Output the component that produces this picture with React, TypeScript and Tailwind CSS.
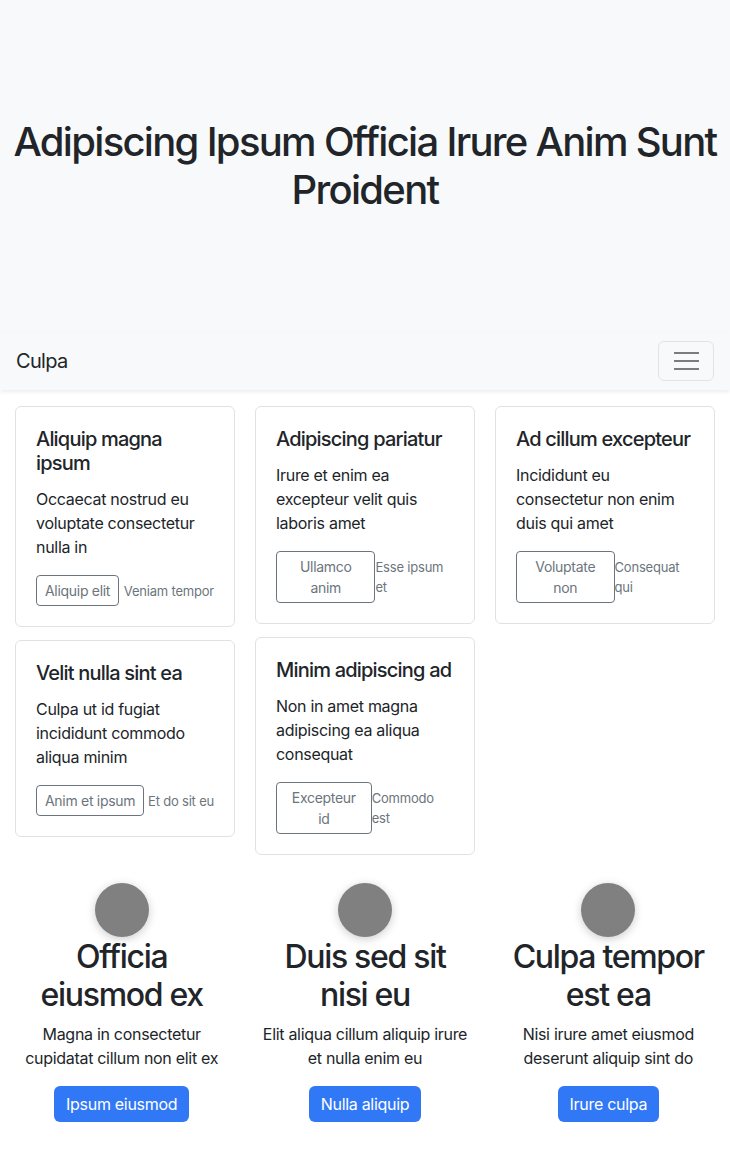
import type { ReactNode } from 'react'

interface CardData {
  title: string
  text: string
  action: string
  note: string
}

const COLUMNS: CardData[][] = [
  [
    {
      title: 'Aliquip magna ipsum',
      text: 'Occaecat nostrud eu voluptate consectetur nulla in',
      action: 'Aliquip elit',
      note: 'Veniam tempor',
    },
    {
      title: 'Velit nulla sint ea',
      text: 'Culpa ut id fugiat incididunt commodo aliqua minim',
      action: 'Anim et ipsum',
      note: 'Et do sit eu',
    },
  ],
  [
    {
      title: 'Adipiscing pariatur',
      text: 'Irure et enim ea excepteur velit quis laboris amet',
      action: 'Ullamco anim',
      note: 'Esse ipsum et',
    },
    {
      title: 'Minim adipiscing ad',
      text: 'Non in amet magna adipiscing ea aliqua consequat',
      action: 'Excepteur id',
      note: 'Commodo est',
    },
  ],
  [
    {
      title: 'Ad cillum excepteur',
      text: 'Incididunt eu consectetur non enim duis qui amet',
      action: 'Voluptate non',
      note: 'Consequat qui',
    },
  ],
]

const FEATURES = [
  {
    title: 'Officia eiusmod ex',
    text: 'Magna in consectetur cupidatat cillum non elit ex',
    cta: 'Ipsum eiusmod',
  },
  {
    title: 'Duis sed sit nisi eu',
    text: 'Elit aliqua cillum aliquip irure et nulla enim eu',
    cta: 'Nulla aliquip',
  },
  {
    title: 'Culpa tempor est ea',
    text: 'Nisi irure amet eiusmod deserunt aliquip sint do',
    cta: 'Irure culpa',
  },
]

function Card({ card }: { card: CardData }) {
  return (
    <div className="rounded-[6px] border border-[#dee2e6] bg-white p-5">
      <h5 className="mb-3 text-[20px] font-medium leading-6 tracking-[-0.8px] text-[#212529]">
        {card.title}
      </h5>
      <p className="mb-4 text-[16px] leading-6 tracking-[-0.3px] text-[#212529]">{card.text}</p>
      <div className="flex items-center justify-between">
        <button
          type="button"
          className="rounded-[4px] border border-[#6c757d] bg-transparent px-2 py-1 text-[14px] leading-[21px] tracking-[-0.3px] text-[#6c757d]"
        >
          {card.action}
        </button>
        <small className="text-[13px] leading-5 tracking-[-0.2px] text-[#6c757d]">{card.note}</small>
      </div>
    </div>
  )
}

function Column({ children }: { children: ReactNode }) {
  return <div className="flex flex-col gap-[13px]">{children}</div>
}

export default function App() {
  return (
    <div className="min-h-[1152px] bg-white font-['Inter','Liberation_Sans',sans-serif] text-[#212529]">
      {/* Hero */}
      <section className="flex h-[332px] items-center justify-center bg-[#f8f9fa] px-3">
        <h1 className="text-center text-[40px] font-medium leading-[48px] tracking-[-1.7px] text-[#212529]">
          Adipiscing Ipsum Officia Irure Anim Sunt Proident
        </h1>
      </section>

      {/* Navbar */}
      <nav className="relative flex h-[58px] items-center justify-between bg-[#f8f9fa] px-4 shadow-[0_2px_4px_rgba(0,0,0,0.075)]">
        <span className="text-[20px] leading-[30px] tracking-[-0.7px] text-[#212529]">Culpa</span>
        <button
          type="button"
          className="flex h-10 w-14 flex-col items-center justify-center gap-[6px] rounded-[6px] border border-[#e2e3e5]"
        >
          <span className="h-[2px] w-[25px] bg-[#7a7c7e]" />
          <span className="h-[2px] w-[25px] bg-[#7a7c7e]" />
          <span className="h-[2px] w-[25px] bg-[#7a7c7e]" />
        </button>
      </nav>

      {/* Cards */}
      <section className="mt-4 grid grid-cols-3 items-start gap-5 px-[15px]">
        {COLUMNS.map((col, i) => (
          <Column key={i}>
            {col.map((card) => (
              <Card key={card.title} card={card} />
            ))}
          </Column>
        ))}
      </section>

      {/* Features */}
      <section className="mt-7 grid grid-cols-3 pb-7">
        {FEATURES.map((f) => (
          <div key={f.title} className="flex flex-col items-center px-3 text-center">
            <div className="h-[54px] w-[54px] rounded-full bg-[#808080] shadow-[0_2px_10px_rgba(0,0,0,0.2)]" />
            <h2 className="mb-2 mt-px px-2 text-[32px] font-medium leading-[38px] tracking-[-1.3px] text-[#212529]">
              {f.title}
            </h2>
            <p className="mb-4 text-[16px] leading-6 tracking-[-0.3px] text-[#212529]">{f.text}</p>
            <button
              type="button"
              className="rounded-[6px] bg-[#3178f6] px-3 py-[6px] text-[16px] leading-6 tracking-[-0.3px] text-white"
            >
              {f.cta}
            </button>
          </div>
        ))}
      </section>
    </div>
  )
}
